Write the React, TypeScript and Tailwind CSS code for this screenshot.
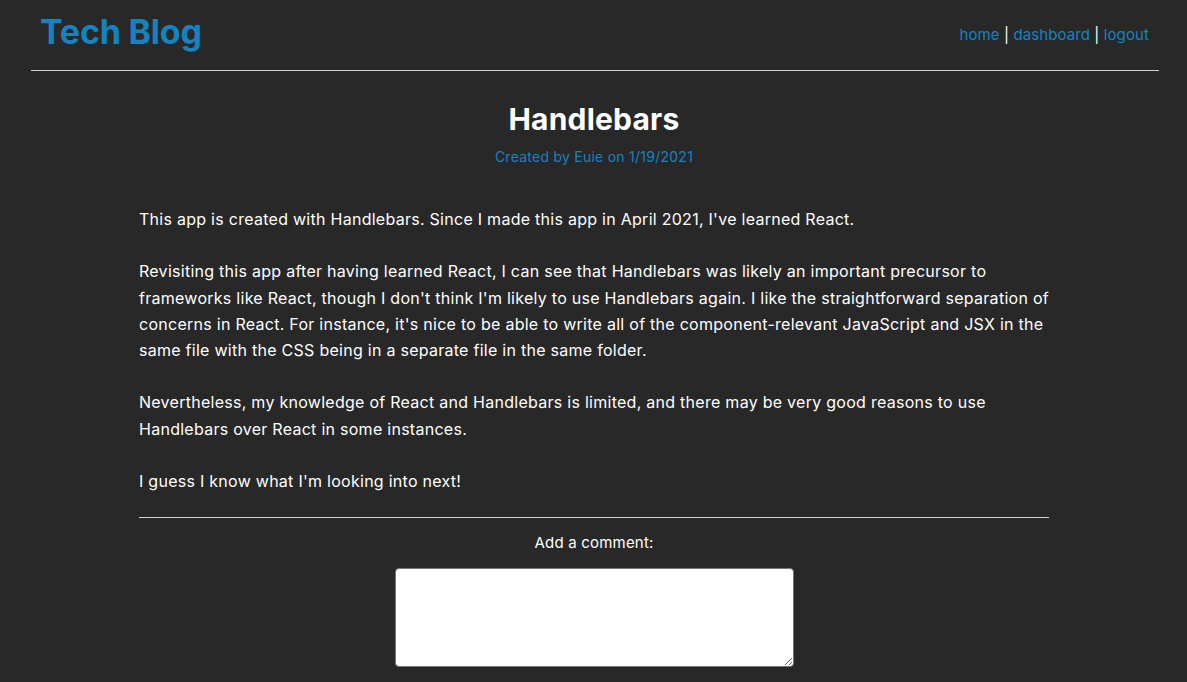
export default function App() {
  const font = { fontFamily: 'Inter, "Noto Sans", sans-serif' };
  return (
    <div className="h-[682px] overflow-hidden bg-[#282828] text-white" style={font}>
      <header className="ml-[31px] mr-[28px] flex items-center justify-between border-b border-[#d0d0d0] pb-[16px] pl-[9px] pr-[10px] pt-[10px]">
        <h1 className="text-[34px] font-bold leading-[44px] tracking-[-0.2px] text-[#1583c0]">Tech Blog</h1>
        <nav className="mt-[6px] text-[15px] tracking-[0.1px] text-white">
          <a className="text-[#1583c0]">home</a> | <a className="text-[#1583c0]">dashboard</a> |{" "}
          <a className="text-[#1583c0]">logout</a>
        </nav>
      </header>
      <main className="mx-auto w-[911px] pl-[1px]">
        <h2 className="mt-[28px] text-center text-[30px] font-bold leading-[40px] tracking-[0.2px]">Handlebars</h2>
        <p className="mt-[8px] text-center text-[14px] leading-[20px] tracking-[0.25px] text-[#1583c0]">Created by Euie on 1/19/2021</p>
        <div className="mt-[39px] text-[16px] leading-[26.2px] tracking-[0.27px]">
          <p>This app is created with Handlebars. Since I made this app in April 2021, I've learned React.</p>
          <br />
          <p>
            Revisiting this app after having learned React, I can see that Handlebars was likely an important precursor to
            frameworks like React, though I don't think I'm likely to use Handlebars again. I like the straightforward separation of
            concerns in React. For instance, it's nice to be able to write all of the component-relevant JavaScript and JSX in the
            same file with the CSS being in a separate file in the same folder.
          </p>
          <br />
          <p>
            Nevertheless, my knowledge of React and Handlebars is limited, and there may be very good reasons to use Handlebars
            over React in some instances.
          </p>
          <br />
          <p>I guess I know what I'm looking into next!</p>
        </div>
        <div className="mt-[23px] border-t border-[#d0d0d0]" />
        <form className="flex flex-col items-center">
          <label className="mt-[14px] text-[15px] leading-[22px] tracking-[0.2px]">Add a comment:</label>
          <textarea className="mt-[14px] h-[99px] w-[399px] rounded-[4px] border border-[#767676] bg-white text-black" />
        </form>
      </main>
    </div>
  );
}
